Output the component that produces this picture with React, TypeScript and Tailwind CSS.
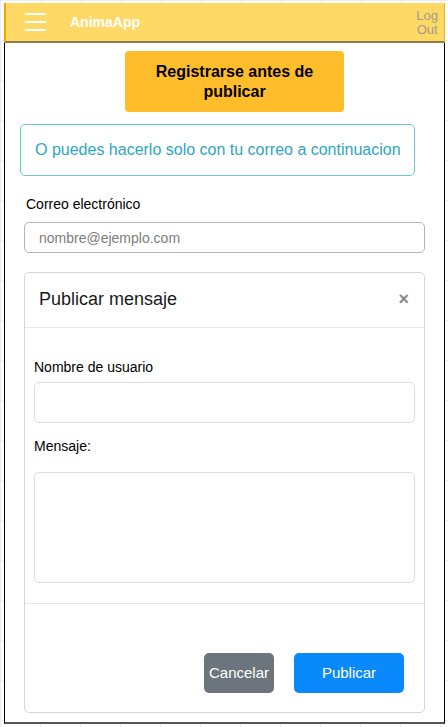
export default function App() {
  return (
    <div className="min-h-screen bg-white pt-[3px] font-['Liberation_Sans',Arial,sans-serif] bg-[linear-gradient(#ececec_1px,transparent_1px),linear-gradient(90deg,#ececec_1px,transparent_1px)] bg-[size:40px_40px]">
      <div className="ml-[4px] w-[441px] h-[721px] flex flex-col bg-white border-r border-l border-black border-b-2 border-b-[#555]">
        {/* Top bar */}
        <header className="h-[40px] shrink-0 flex items-center bg-[#ffd966] border-l-2 border-l-[#f0a500] border-r border-r-[#e6b422] border-b-2 border-b-[#8c7a4a] -ml-px -mr-px">
          <button className="ml-[19px] flex flex-col gap-[6px] w-[21px]">
            <span className="block h-[2px] bg-white" />
            <span className="block h-[2px] bg-white" />
            <span className="block h-[2px] bg-white" />
          </button>
          <span className="ml-[24px] text-white font-bold text-[14px]">AnimaApp</span>
          <button className="ml-auto mr-[6px] mt-[2px] flex flex-col items-center text-[13px] leading-[14px] text-[#a39a8a]">
            <span>Log</span>
            <span>Out</span>
          </button>
        </header>

        <div className="flex flex-col">
          <button className="mt-[8px] ml-[120px] w-[219px] h-[61px] rounded-[4px] bg-[#ffbc2b] text-black font-bold text-[16px] leading-[20px] px-6">
            Registrarse antes de publicar
          </button>

          <div className="mt-[12px] ml-[15px] w-[395px] h-[52px] rounded-[5px] border border-[#6dc6d4] flex items-center pl-[14px] text-[16px] whitespace-nowrap text-[#2ea6c2]">
            O puedes hacerlo solo con tu correo a continuacion
          </div>

          <label className="mt-[20px] ml-[21px] text-[14px] leading-[16px] text-black">Correo electrónico</label>
          <input
            className="mt-[10px] ml-[19px] w-[401px] h-[31px] rounded-[5px] border border-[#b5b5b5] px-[14px] text-[14px] placeholder:text-[#7d7d7d] outline-none"
            placeholder="nombre@ejemplo.com"
          />

          {/* Modal */}
          <div className="mt-[19px] ml-[19px] w-[401px] h-[441px] rounded-[5px] border border-[#d6d6d6] flex flex-col">
            <div className="h-[55px] shrink-0 flex items-center justify-between px-[14px] border-b border-[#e6e6e6]">
              <h2 className="text-[18px] text-[#1a1a1a] -mt-[2px]">Publicar mensaje</h2>
              <span className="text-[#888] text-[18px] font-bold mr-[1px] -mt-[2px]">×</span>
            </div>
            <div className="flex flex-col px-[9px] pt-[30px] pb-[20px] border-b border-[#e6e6e6]">
              <label className="text-[14px] leading-[18px] text-black">Nombre de usuario</label>
              <input className="mt-[6px] h-[41px] rounded-[5px] border border-[#dcdde3]" />
              <label className="mt-[14px] text-[14px] leading-[18px] text-black">Mensaje:</label>
              <textarea className="mt-[17px] h-[111px] rounded-[5px] border border-[#dcdde3] resize-none block" />
            </div>
            <div className="flex-1 flex items-end justify-end gap-[20px] pr-[20px] pb-[19px]">
              <button className="w-[70px] h-[40px] rounded-[5px] bg-[#6c757d] text-white text-[15px]">Cancelar</button>
              <button className="w-[110px] h-[40px] rounded-[5px] bg-[#0a89fc] text-white text-[15px]">Publicar</button>
            </div>
          </div>
        </div>
      </div>
    </div>
  );
}
